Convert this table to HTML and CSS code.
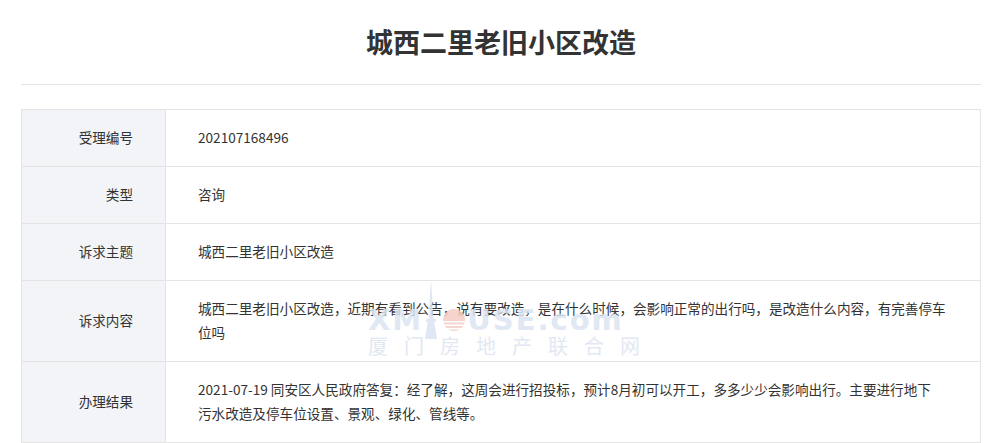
FILE: index.html
```
<!DOCTYPE html>
<html>

<head>
    <title>城西二里老旧小区改造</title>
    <link rel="stylesheet" href="styles.css">
</head>

<body>

    <div class="page">
        <h2 class="title">城西二里老旧小区改造</h2>

        <div class="detail">
            <table class="info">
                <tr>
                    <th>受理编号</th>
                    <td>202107168496</td>
                </tr>
                <tr>
                    <th>类型</th>
                    <td>咨询</td>
                </tr>
                <tr>
                    <th>诉求主题</th>
                    <td>城西二里老旧小区改造</td>
                </tr>
                <tr>
                    <th>诉求内容</th>
                    <td>城西二里老旧小区改造，近期有看到公告，说有要改造，是在什么时候，会影响正常的出行吗，是改造什么内容，有完善停车位吗</td>
                </tr>
                <tr>
                    <th>办理结果</th>
                    <td>2021-07-19 同安区人民政府答复：经了解，这周会进行招投标，预计8月初可以开工，多多少少会影响出行。主要进行地下<span class="nowrap">污水</span>改造及停车位设置、景观、绿化、管线等。</td>
                </tr>
            </table>

            <div class="watermark">
                <div class="wm-logo">
                    <span>XM</span>
                    <svg class="wm-tower" width="16" height="60" viewBox="0 0 16 60">
                        <path d="M8 0 L9 16 L10 36 L14 60 L2 60 L6 36 L7 16 Z" fill="#d9e3f1"/>
                        <rect x="3" y="40" width="10" height="3" fill="#d9e3f1"/>
                    </svg>
                    <svg class="wm-sun" width="24" height="24" viewBox="0 0 24 24">
                        <circle cx="12" cy="12" r="11" fill="#f5cdc6"/>
                        <rect x="0" y="13" width="24" height="1.5" fill="#fff"/>
                        <rect x="0" y="16.5" width="24" height="1.5" fill="#fff"/>
                        <rect x="0" y="20" width="24" height="1.5" fill="#fff"/>
                    </svg>
                    <span>USE.com</span>
                </div>
                <div class="wm-name">厦门房地产联合网</div>
            </div>
        </div>
    </div>

</body>

</html>
```

FILE: styles.css
```
body {
    margin: 0;
    background: #ffffff;
    font-family: "Noto Sans CJK SC", "Noto Sans", sans-serif;
    color: #333;
}

.page {
    width: 960px;
    margin: 0 0 0 21px;
}

.title {
    margin: 0 0 24px;
    padding: 24px 0 24px;
    line-height: 36px;
    font-size: 27px;
    font-weight: bold;
    text-align: center;
    color: #333;
    border-bottom: 1px solid #e6e6e6;
}

.detail {
    position: relative;
}

.info {
    width: 100%;
    border-collapse: collapse;
    font-size: 13.6px;
    line-height: 24px;
}

.info th,
.info td {
    border: 1px solid #e4e4e4;
    padding: 15px 32px 17px;
}

.info th {
    width: 79px;
    text-align: right;
    font-weight: normal;
    background: #f2f4f7;
    vertical-align: middle;
}

.info td {
    text-align: left;
}

.nowrap {
    white-space: nowrap;
}

.watermark {
    position: absolute;
    left: 347px;
    top: 190px;
    width: 272px;
    pointer-events: none;
    opacity: 0.85;
}

.wm-logo {
    display: flex;
    align-items: flex-end;
    height: 36px;
    font-family: "DejaVu Sans", sans-serif;
    font-weight: bold;
    font-size: 29px;
    line-height: 29px;
    letter-spacing: 2px;
    color: #dbe4f1;
}

.wm-tower {
    margin: 0 2px -4px 0;
    align-self: flex-end;
}

.wm-sun {
    margin: 0 1px 3px 1px;
}

.wm-name {
    margin-top: 0;
    font-size: 20px;
    line-height: 22px;
    letter-spacing: 16px;
    color: #dde5f1;
    white-space: nowrap;
}
```
